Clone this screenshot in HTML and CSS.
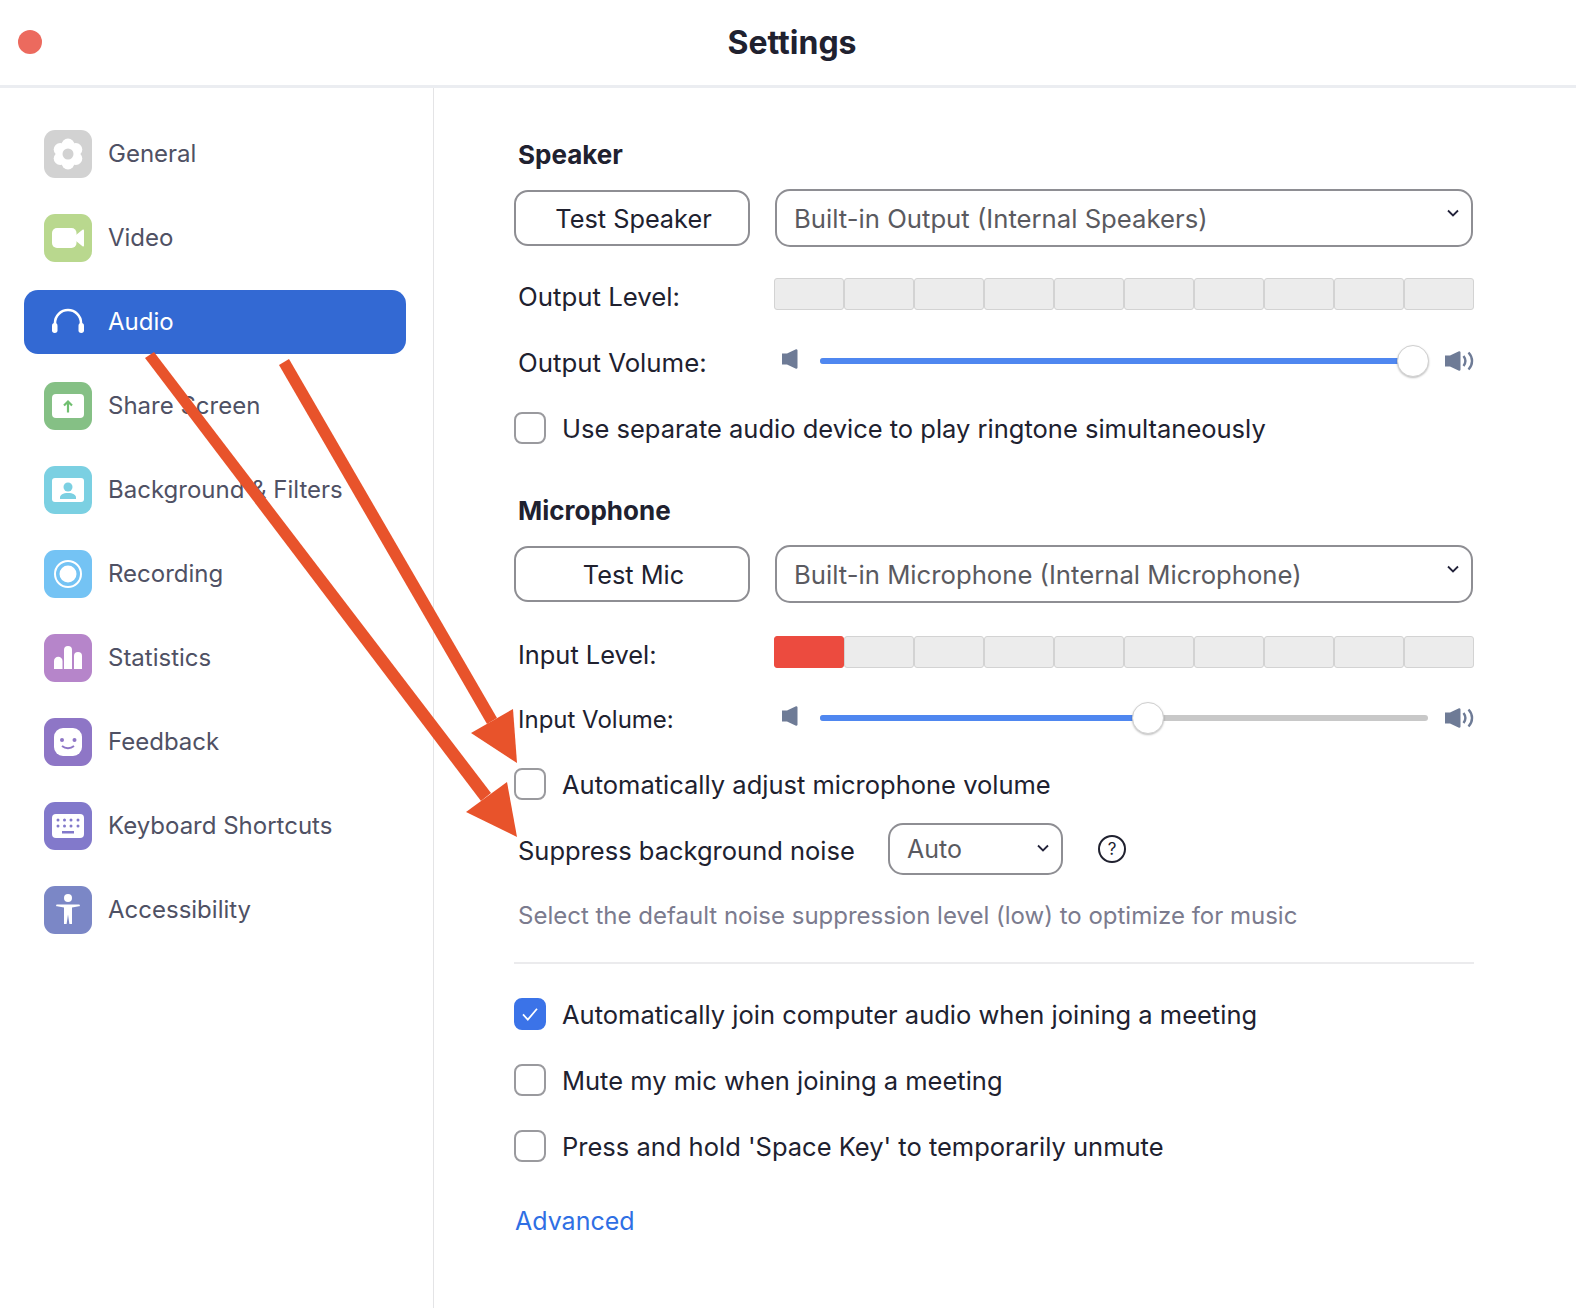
FILE: index.html
```html
<!DOCTYPE html>
<html lang="en">
  <head>
    <meta charset="UTF-8" />
    <title>Settings</title>
    <link rel="stylesheet" href="styles.css">
  </head>
  <body>
    <header class="titlebar">
      <span class="close-dot"></span>
      <h1 class="title">Settings</h1>
    </header>

    <div class="layout">
      <nav class="sidebar">
        <a class="nav-item">
          <svg class="nav-icon" viewBox="0 0 48 48"><rect width="48" height="48" rx="11" fill="#d2d2d2"/><g fill="#fff"><circle cx="24" cy="15" r="6.5"/><circle cx="24" cy="33" r="6.5"/><circle cx="16.2" cy="19.5" r="6.5"/><circle cx="31.8" cy="19.5" r="6.5"/><circle cx="16.2" cy="28.5" r="6.5"/><circle cx="31.8" cy="28.5" r="6.5"/><circle cx="24" cy="24" r="9"/></g><circle cx="24" cy="24" r="5.5" fill="#d2d2d2"/></svg>
          <span class="nav-label">General</span>
        </a>
        <a class="nav-item">
          <svg class="nav-icon" viewBox="0 0 48 48"><rect width="48" height="48" rx="11" fill="#b9d88e"/><rect x="8" y="14" width="24.500" height="20" rx="5" fill="#fff"/><path d="M32 21l6.500-5.200a1 1 0 0 1 1.500.8v14.800a1 1 0 0 1-1.500.8L32 27z" fill="#fff"/></svg>
          <span class="nav-label">Video</span>
        </a>
        <a class="nav-item active">
          <svg class="nav-icon" viewBox="0 0 48 48"><path d="M11 32v-7a13 13 0 0 1 26 0v7" fill="none" stroke="#fff" stroke-width="2.600"/><rect x="8" y="25" width="5.500" height="10" rx="2.700" fill="#fff"/><rect x="34.500" y="25" width="5.500" height="10" rx="2.700" fill="#fff"/></svg>
          <span class="nav-label">Audio</span>
        </a>
        <a class="nav-item">
          <svg class="nav-icon" viewBox="0 0 48 48"><rect width="48" height="48" rx="11" fill="#85c085"/><rect x="8" y="12" width="32" height="24" rx="4" fill="#fff"/><path d="M24 30.500V19.500M20 23.500l4-4 4 4" fill="none" stroke="#70bf70" stroke-width="2.200"/></svg>
          <span class="nav-label">Share Screen</span>
        </a>
        <a class="nav-item">
          <svg class="nav-icon" viewBox="0 0 48 48"><rect width="48" height="48" rx="11" fill="#7bd0e2"/><rect x="8" y="12" width="32" height="24" rx="3" fill="#fff"/><circle cx="24" cy="21" r="4.500" fill="#7bd0e2"/><path d="M16 33v-1.500c0-2.500 3-4.500 8-4.500s8 2 8 4.500V33z" fill="#7bd0e2"/></svg>
          <span class="nav-label">Background &amp; Filters</span>
        </a>
        <a class="nav-item">
          <svg class="nav-icon" viewBox="0 0 48 48"><rect width="48" height="48" rx="11" fill="#74c3f4"/><circle cx="24" cy="24" r="13" fill="none" stroke="#fff" stroke-width="2"/><circle cx="24" cy="24" r="8.500" fill="#fff"/></svg>
          <span class="nav-label">Recording</span>
        </a>
        <a class="nav-item">
          <svg class="nav-icon" viewBox="0 0 48 48"><rect width="48" height="48" rx="11" fill="#b685ca"/><g fill="#fff"><path d="M10 35V27a4 4 0 0 1 8.500 0v8z"/><path d="M20 35V16a4 4 0 0 1 8 0v19z"/><path d="M30 35V22a4 4 0 0 1 8 0v13z"/></g></svg>
          <span class="nav-label">Statistics</span>
        </a>
        <a class="nav-item">
          <svg class="nav-icon" viewBox="0 0 48 48"><rect width="48" height="48" rx="11" fill="#8e76c6"/><rect x="10" y="10" width="28" height="28" rx="9" fill="#fff"/><circle cx="18" cy="22" r="2" fill="#8e76c6"/><circle cx="30.500" cy="22" r="2" fill="#8e76c6"/><path d="M18 28c3.500 3 8.500 3 12 0" fill="none" stroke="#8e76c6" stroke-width="1.800"/></svg>
          <span class="nav-label">Feedback</span>
        </a>
        <a class="nav-item">
          <svg class="nav-icon" viewBox="0 0 48 48"><rect width="48" height="48" rx="11" fill="#8279cb"/><rect x="8" y="12" width="32" height="24" rx="4" fill="#fff"/><g fill="#8279cb"><circle cx="14" cy="18" r="1.500"/><circle cx="20.500" cy="18" r="1.500"/><circle cx="27" cy="18" r="1.500"/><circle cx="34" cy="18" r="1.500"/><circle cx="14" cy="24" r="1.500"/><circle cx="20.500" cy="24" r="1.500"/><circle cx="27" cy="24" r="1.500"/><circle cx="34" cy="24" r="1.500"/><rect x="18" y="29" width="12" height="2.500"/></g></svg>
          <span class="nav-label">Keyboard Shortcuts</span>
        </a>
        <a class="nav-item">
          <svg class="nav-icon" viewBox="0 0 48 48"><rect width="48" height="48" rx="11" fill="#7b87c6"/><g fill="#fff"><circle cx="24" cy="12" r="4"/><path d="M13 18.500h22a.900.900 0 0 1 0 1.800l-7 1.200V38h-2.600L24 28.500 22.600 38H20V21.500l-7-1.200a.900.900 0 0 1 0-1.800z"/></g></svg>
          <span class="nav-label">Accessibility</span>
        </a>
      </nav>

      <main class="content">
        <h2 class="section-title">Speaker</h2>
        <div class="device-row">
          <button class="test-btn">Test Speaker</button>
          <div class="select device-select">
            Built-in Output (Internal Speakers)
            <svg class="chevron" viewBox="0 0 12 8"><path d="M1 1.500l5 5 5-5" fill="none" stroke="#23233a" stroke-width="1.800"/></svg>
          </div>
        </div>
        <div class="level-row">
          <span class="row-label">Output Level:</span>
          <div class="level-bar">
            <i></i><i></i><i></i><i></i><i></i><i></i><i></i><i></i><i></i><i></i>
          </div>
        </div>
        <div class="volume-row">
          <span class="row-label">Output Volume:</span>
          <svg class="spk-low" viewBox="0 0 16 20"><path d="M0 4.500h5L14 .3a1.300 1.300 0 0 1 1.500 1v17.400a1.300 1.300 0 0 1-1.500 1L5 15.500H0z" fill="#6e7b96"/></svg>
          <div class="track">
            <div class="fill" style="width: 97.5%"></div>
            <span class="thumb" style="left: 97.5%"></span>
          </div>
          <svg class="spk-high" viewBox="0 0 29 20"><path d="M0 4.500h5L14 .3a1.300 1.300 0 0 1 1.500 1v17.400a1.300 1.300 0 0 1-1.500 1L5 15.500H0z" fill="#6e7b96"/><path d="M18.500 5c2.300 3 2.300 7 0 10M23.500 1.500c4.700 5 4.700 12 0 17" fill="none" stroke="#6e7b96" stroke-width="2.400"/></svg>
        </div>
        <label class="check-row speaker-check">
          <span class="checkbox"></span>
          <span>Use separate audio device to play ringtone simultaneously</span>
        </label>

        <h2 class="section-title mic-title">Microphone</h2>
        <div class="device-row">
          <button class="test-btn">Test Mic</button>
          <div class="select device-select">
            Built-in Microphone (Internal Microphone)
            <svg class="chevron" viewBox="0 0 12 8"><path d="M1 1.500l5 5 5-5" fill="none" stroke="#23233a" stroke-width="1.800"/></svg>
          </div>
        </div>
        <div class="level-row mic-level">
          <span class="row-label">Input Level:</span>
          <div class="level-bar">
            <i class="on"></i><i></i><i></i><i></i><i></i><i></i><i></i><i></i><i></i><i></i>
          </div>
        </div>
        <div class="volume-row mic-volume">
          <span class="row-label">Input Volume:</span>
          <svg class="spk-low" viewBox="0 0 16 20"><path d="M0 4.500h5L14 .3a1.300 1.300 0 0 1 1.500 1v17.400a1.300 1.300 0 0 1-1.500 1L5 15.500H0z" fill="#6e7b96"/></svg>
          <div class="track">
            <div class="fill" style="width: 54%"></div>
            <span class="thumb" style="left: 54%"></span>
          </div>
          <svg class="spk-high" viewBox="0 0 29 20"><path d="M0 4.500h5L14 .3a1.300 1.300 0 0 1 1.500 1v17.400a1.300 1.300 0 0 1-1.500 1L5 15.500H0z" fill="#6e7b96"/><path d="M18.500 5c2.300 3 2.300 7 0 10M23.500 1.500c4.700 5 4.700 12 0 17" fill="none" stroke="#6e7b96" stroke-width="2.400"/></svg>
        </div>
        <label class="check-row mic-check">
          <span class="checkbox"></span>
          <span>Automatically adjust microphone volume</span>
        </label>
        <div class="noise-row">
          <span class="noise-label">Suppress background noise</span>
          <div class="select noise-select">
            Auto
            <svg class="chevron" viewBox="0 0 12 8"><path d="M1 1.500l5 5 5-5" fill="none" stroke="#23233a" stroke-width="1.800"/></svg>
          </div>
          <span class="help">?</span>
        </div>
        <p class="hint">Select the default noise suppression level (low) to optimize for music</p>
        <hr class="divider" />
        <label class="check-row first-check">
          <span class="checkbox checked">
            <svg viewBox="0 0 32 32"><path d="M8 16.500l5.500 6L24 10" fill="none" stroke="#fff" stroke-width="2"/></svg>
          </span>
          <span>Automatically join computer audio when joining a meeting</span>
        </label>
        <label class="check-row next-check">
          <span class="checkbox"></span>
          <span>Mute my mic when joining a meeting</span>
        </label>
        <label class="check-row next-check">
          <span class="checkbox"></span>
          <span>Press and hold 'Space Key' to temporarily unmute</span>
        </label>
        <a class="advanced">Advanced</a>
      </main>
    </div>

    <!-- red arrows drawn on top of the screenshot -->
    <svg class="arrows" viewBox="0 0 1576 1308">
      <g fill="#e8532b">
        <path d="M145 358L154 352L491 793L481 801z"/>
        <path d="M279 365L289 359L497 718L487 724z"/>
        <polygon points="517,837 466,812 507,782"/>
        <polygon points="517,763 471,733 513,709"/>
      </g>
    </svg>
  </body>
</html>
```

FILE: styles.css
```css
* {
  box-sizing: border-box;
}

html,
body {
  height: 100%;
}

body {
  margin: 0;
  position: relative;
  overflow: hidden;
  background: #fff;
  color: #20212f;
  font-family: Inter, "Liberation Sans", sans-serif;
  font-size: 25.5px;
}

.titlebar {
  display: flex;
  align-items: center;
  justify-content: center;
  position: relative;
  height: 88px;
  border-bottom: 3px solid #ebedf1;
}

.close-dot {
  position: absolute;
  left: 18px;
  top: 30px;
  width: 24px;
  height: 24px;
  border-radius: 50%;
  background: #ec6a5e;
}

.title {
  margin: 0 0 1px 8px;
  font-size: 32px;
  font-weight: 700;
}

.layout {
  display: flex;
  height: 1220px;
}

.sidebar {
  display: flex;
  flex-direction: column;
  gap: 20px;
  flex: none;
  width: 434px;
  padding: 34px 27px 0 24px;
  border-right: 1px solid #e4e4e6;
}

.nav-item {
  display: flex;
  align-items: center;
  gap: 16px;
  height: 64px;
  padding-left: 20px;
  border-radius: 14px;
  color: #4f5164;
  font-size: 24px;
}

.nav-item.active {
  background: #3369d3;
  color: #fff;
}

.nav-label {
  margin-bottom: 2px;
}

.nav-icon {
  flex: none;
  width: 48px;
  height: 48px;
}

.content {
  flex: none;
  width: 960px;
  margin-left: 80px;
  padding-top: 50px;
}

.section-title {
  height: 34px;
  margin: 0 0 17px 4px;
  font-size: 26px;
  font-weight: 700;
  line-height: 34px;
}

.mic-title {
  margin-top: 50px;
}

.device-row {
  display: flex;
  align-items: center;
  gap: 25px;
  height: 58px;
}

.test-btn {
  width: 236px;
  height: 56px;
  padding: 0 0 0 3px;
  border: 2px solid #8e8e93;
  border-radius: 14px;
  background: #fff;
  color: #20212f;
  font: inherit;
  font-size: 25.3px;
}

.select {
  position: relative;
  display: flex;
  align-items: center;
  border: 2px solid #8e8e93;
  border-radius: 15px;
  color: #5a5a60;
}

.device-select {
  width: 698px;
  height: 58px;
  padding-left: 17px;
  font-size: 25.7px;
}

.chevron {
  position: absolute;
  right: 12px;
  top: 18px;
  width: 12px;
  height: 8px;
}

.noise-select {
  flex: none;
  width: 175px;
  height: 52px;
  margin-left: 25px;
  padding-left: 17px;
  font-size: 25px;
}

.noise-select .chevron {
  top: 19px;
}

.level-row {
  display: flex;
  align-items: center;
  height: 32px;
  margin-top: 31px;
  padding-left: 4px;
}

.mic-level {
  margin-top: 33px;
}

.row-label {
  flex: none;
  width: 256px;
  margin-top: 4px;
  font-size: 25.8px;
}

.mic-level .row-label {
  font-size: 25.4px;
}

.level-bar {
  display: flex;
  flex: 1;
  height: 32px;
}

.level-bar i {
  flex: 1;
  border: 1px solid #d3d3d3;
  border-radius: 3px;
  background: #ececec;
}

.level-bar i.on {
  border-color: #ec4b3f;
  background: #ec4b3f;
}

.volume-row {
  display: flex;
  align-items: center;
  height: 34px;
  margin-top: 34px;
  padding-left: 4px;
}

.volume-row .row-label {
  margin-top: 2px;
}

.mic-volume {
  margin-top: 33px;
}

.mic-volume .row-label {
  font-size: 24px;
}

.spk-low {
  flex: none;
  width: 16px;
  height: 20px;
  margin: -4px 22px 0 8px;
}

.track {
  position: relative;
  flex: none;
  width: 608px;
  height: 6px;
  border-radius: 3px;
  background: #c8c8c8;
}

.fill {
  height: 100%;
  border-radius: 3px;
  background: #4f87f0;
}

.thumb {
  position: absolute;
  top: -13px;
  width: 32px;
  height: 32px;
  margin-left: -16px;
  border: 1px solid #d0d0d0;
  border-radius: 50%;
  background: #fff;
  box-shadow: 0 1px 2px rgba(0, 0, 0, 0.25);
}

.spk-high {
  flex: none;
  width: 29px;
  height: 20px;
  margin-left: 17px;
}

.check-row {
  display: flex;
  align-items: center;
  gap: 16px;
  height: 32px;
}

.speaker-check {
  margin-top: 34px;
}

.mic-check {
  margin-top: 33px;
}

.first-check {
  margin-top: 34px;
}

.next-check {
  margin-top: 34px;
}

.checkbox {
  flex: none;
  width: 32px;
  height: 32px;
  border: 2px solid #9a9a9e;
  border-radius: 8px;
  background: #fff;
}

.checkbox.checked {
  border-color: #3b73e8;
  background: #3b73e8;
}

.checkbox svg {
  display: block;
  width: 28px;
  height: 28px;
}

.noise-row {
  display: flex;
  align-items: center;
  height: 52px;
  margin-top: 23px;
  padding-left: 4px;
}

.noise-label {
  flex: none;
  width: 345px;
  margin-top: 2px;
  white-space: nowrap;
}

.help {
  display: flex;
  align-items: center;
  justify-content: center;
  flex: none;
  width: 28px;
  height: 28px;
  margin-left: 35px;
  border: 2px solid #20212f;
  border-radius: 50%;
  font-size: 17px;
}

.hint {
  margin: 26px 0 0 4px;
  color: #7b7b8e;
  font-size: 24px;
  line-height: 30px;
}

.divider {
  height: 2px;
  margin: 31px 0 0;
  border: none;
  background: #ebebed;
}

.advanced {
  display: block;
  margin: 44px 0 0 1px;
  color: #2f6fe4;
  font-size: 25px;
  line-height: 30px;
}

.arrows {
  position: absolute;
  left: 0;
  top: 0;
  width: 1576px;
  height: 1308px;
  pointer-events: none;
}
```
